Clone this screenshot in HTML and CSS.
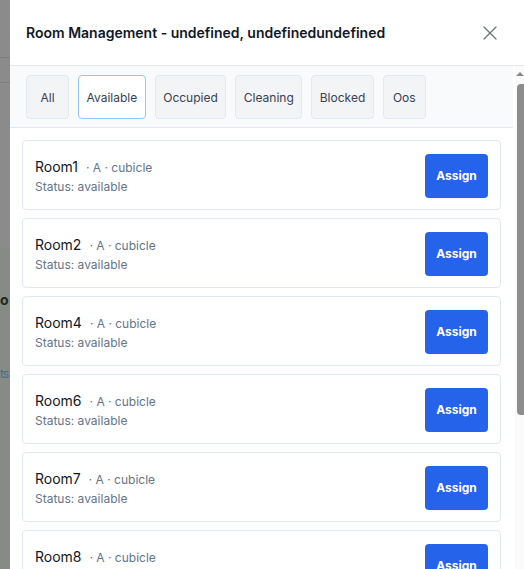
FILE: index.html
```html
<!DOCTYPE html>
<html>
<head>
<meta charset="utf-8">
<link rel="stylesheet" href="styles.css">
</head>
<body>
<div class="backdrop">
  <div class="bd-top"></div>
  <div class="bd-band"></div>
  <div class="bd-mid"></div>
  <div class="bd-lower">
    <div class="bd-o">o</div>
    <div class="bd-ts">ts</div>
  </div>
</div>
<div class="panel">
  <div class="header">
    <h2 class="title">Room Management - undefined, undefinedundefined</h2>
    <button class="close" aria-label="Close">
      <svg width="16" height="16" viewBox="0 0 16 16"><path d="M2 2 L14 14 M14 2 L2 14" stroke="#6b7280" stroke-width="1.3" fill="none" stroke-linecap="round"/></svg>
    </button>
  </div>
  <div class="scroll">
    <div class="scroll-content">
      <div class="tabs">
        <button class="tab">All</button>
        <button class="tab active">Available</button>
        <button class="tab">Occupied</button>
        <button class="tab">Cleaning</button>
        <button class="tab">Blocked</button>
        <button class="tab">Oos</button>
      </div>
      <div class="list">
        <div class="card"><div class="info"><div class="name">Room1<span class="meta">· A · cubicle</span></div><div class="status">Status: available</div></div><button class="assign">Assign</button></div>
        <div class="card"><div class="info"><div class="name">Room2<span class="meta">· A · cubicle</span></div><div class="status">Status: available</div></div><button class="assign">Assign</button></div>
        <div class="card"><div class="info"><div class="name">Room4<span class="meta">· A · cubicle</span></div><div class="status">Status: available</div></div><button class="assign">Assign</button></div>
        <div class="card"><div class="info"><div class="name">Room6<span class="meta">· A · cubicle</span></div><div class="status">Status: available</div></div><button class="assign">Assign</button></div>
        <div class="card"><div class="info"><div class="name">Room7<span class="meta">· A · cubicle</span></div><div class="status">Status: available</div></div><button class="assign">Assign</button></div>
        <div class="card"><div class="info"><div class="name">Room8<span class="meta">· A · cubicle</span></div><div class="status">Status: available</div></div><button class="assign">Assign</button></div>
      </div>
    </div>
    <div class="scrollbar">
      <div class="sb-arrow"></div>
      <div class="sb-thumb"></div>
    </div>
  </div>
</div>
</body>
</html>
```

FILE: styles.css
```css
* { box-sizing: border-box; }
html, body { margin: 0; height: 100%; }
body {
  display: flex;
  height: 569px;
  overflow: hidden;
  font-family: Inter, "Noto Sans", sans-serif;
  background: #8c8c8c;
}
.backdrop {
  width: 10px;
  flex: none;
  display: flex;
  flex-direction: column;
  overflow: hidden;
  background: #8b8b8b;
}
.bd-top { height: 58px; border-bottom: 1px solid #7e7e7e; flex: none; }
.bd-band { height: 25px; border-bottom: 1px solid #7e7e7e; flex: none; }
.bd-mid { height: 165px; flex: none; }
.bd-lower { flex: 1; background: #878b86; }
.bd-o { margin-top: 44px; font-weight: 700; font-size: 14px; line-height: 16px; color: #1e2a1e; }
.bd-ts { margin-top: 59px; font-size: 12px; line-height: 14px; color: #4a6a90; letter-spacing: -1px; }
.panel {
  flex: 1;
  min-width: 0;
  background: #fff;
  display: flex;
  flex-direction: column;
  height: 569px;
}
.header {
  height: 66px;
  flex: none;
  display: flex;
  align-items: center;
  justify-content: space-between;
  padding: 0 26px 0 16px;
  border-bottom: 1px solid #e5e7eb;
}
.title {
  margin: 0;
  font-size: 14px;
  font-weight: 600;
  color: #111827;
}
.close {
  border: 0;
  background: none;
  padding: 0;
  width: 16px;
  height: 16px;
  display: flex;
  cursor: pointer;
}
.scroll {
  flex: 1;
  min-height: 0;
  display: flex;
}
.scroll-content {
  flex: 1;
  min-width: 0;
  overflow: hidden;
  display: flex;
  flex-direction: column;
}
.scrollbar {
  width: 9px;
  flex: none;
  background: #fafafa;
  display: flex;
  flex-direction: column;
  align-items: flex-end;
  padding-top: 6px;
}
.sb-arrow {
  width: 0;
  height: 0;
  border-left: 4px solid transparent;
  border-right: 4px solid transparent;
  border-bottom: 4px solid #8a8a8a;
}
.sb-thumb {
  margin-top: 8px;
  width: 7px;
  height: 331px;
  background: #8d8d8d;
  border-radius: 4px 0 0 4px;
}
.tabs {
  display: flex;
  gap: 9px;
  padding: 9px 16px 8px 16px;
  background: #f8fafc;
  border-bottom: 1px solid #e2e8f0;
  margin-right: 2px;
}
.tab {
  height: 44px;
  min-width: 43px;
  padding: 0 7.5px;
  font-family: inherit;
  font-size: 12px;
  color: #374151;
  background: #f3f4f6;
  border: 1px solid #e2e8f0;
  border-radius: 4px;
}
.tab.active {
  background: #fff;
  border-color: #93c5fd;
}
.list {
  display: flex;
  flex-direction: column;
  gap: 8px;
  padding: 12px 14px 12px 12px;
}
.card {
  height: 70px;
  flex: none;
  display: flex;
  align-items: center;
  justify-content: space-between;
  padding: 0 12px;
  border: 1px solid #e2e8f0;
  border-radius: 4px;
  background: #fff;
}
.info { display: flex; flex-direction: column; gap: 4px; padding-top: 1px; }
.name { font-size: 14px; color: #111827; }
.meta { font-size: 12px; color: #64748b; margin-left: 8px; }
.status { font-size: 12px; color: #64748b; }
.assign {
  width: 63px;
  height: 44px;
  background: #2563eb;
  color: #fff;
  border: 0;
  border-radius: 4px;
  font-family: inherit;
  font-size: 12px;
  font-weight: 700;
  margin-top: 1px;
}
```
